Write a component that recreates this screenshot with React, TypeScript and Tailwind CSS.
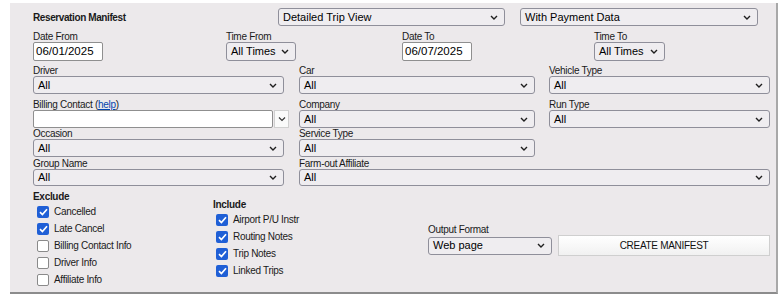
import React from "react";

const Chevron = () => (
  <svg width="8" height="5" viewBox="0 0 8 5" className="shrink-0">
    <path d="M1 1 L4 4 L7 1" fill="none" stroke="#1f1f1f" strokeWidth="1.4" />
  </svg>
);

const Select = ({
  value,
  w,
  h = "h-[18px]",
}: {
  value: string;
  w: string;
  h?: string;
}) => (
  <div
    className={`${w} ${h} flex items-center justify-between border border-[#8f8f9a] rounded-[3px] bg-[#efedf0] pl-[4px] pr-[6px] text-[11px] leading-none text-black`}
  >
    <span>{value}</span>
    <Chevron />
  </div>
);

const Label = ({ children }: { children: React.ReactNode }) => (
  <div className="h-[11px] text-[10px] leading-[11px] tracking-[-0.3px] text-[#1a1a1a] whitespace-nowrap">
    {children}
  </div>
);

const DateInput = ({ value }: { value: string }) => (
  <div className="w-[70px] h-[19px] flex items-center border border-[#8f8f8f] rounded-[2px] bg-white pl-[2px] text-[11.5px] leading-none text-black">
    {value}
  </div>
);

const Check = ({ checked, label }: { checked: boolean; label: string }) => (
  <div className="h-[17px] flex items-center">
    {checked ? (
      <div className="w-[12px] h-[12px] rounded-[2px] bg-[#1f5fd6] flex items-center justify-center">
        <svg width="9" height="8" viewBox="0 0 9 8">
          <path d="M1 4.2 L3.4 6.5 L8 1.3" fill="none" stroke="white" strokeWidth="1.7" />
        </svg>
      </div>
    ) : (
      <div className="w-[12px] h-[12px] rounded-[2px] bg-white border border-[#8a8a8a]" />
    )}
    <span className="ml-[5px] text-[10px] tracking-[-0.3px] text-[#1a1a1a] leading-none">
      {label}
    </span>
  </div>
);

export default function App() {
  return (
    <div className="w-[782px] h-[296px] bg-white font-['Liberation_Sans',Arial,sans-serif] text-black overflow-hidden">
      <div className="ml-[10px] mt-[3px] w-[768px] h-[291px] bg-[#ece9eb] border-r-2 border-b-2 border-r-[#a8a8a8] border-b-[#8c8c8c] pl-[23px] pt-[5px]">
        {/* Row 1 */}
        <div className="flex items-center h-[18px]">
          <div className="w-[245px] text-[10px] font-bold tracking-[-0.4px] text-[#1a1a1a]">
            Reservation Manifest
          </div>
          <Select value="Detailed Trip View" w="w-[227px]" />
          <div className="ml-[15px]">
            <Select value="With Payment Data" w="w-[238px]" />
          </div>
        </div>

        {/* Row 2 */}
        <div className="flex mt-[5px]">
          <div className="w-[193px]">
            <Label>Date From</Label>
            <DateInput value="06/01/2025" />
          </div>
          <div className="w-[176px]">
            <Label>Time From</Label>
            <Select value="All Times" w="w-[70px]" h="h-[19px]" />
          </div>
          <div className="w-[192px]">
            <Label>Date To</Label>
            <DateInput value="06/07/2025" />
          </div>
          <div>
            <Label>Time To</Label>
            <Select value="All Times" w="w-[71px]" h="h-[19px]" />
          </div>
        </div>

        {/* Driver row */}
        <div className="grid grid-cols-[266px_250px_221px] mt-[4px]">
          <div>
            <Label>Driver</Label>
            <Select value="All" w="w-[251px]" />
          </div>
          <div>
            <Label>Car</Label>
            <Select value="All" w="w-[236px]" />
          </div>
          <div>
            <Label>Vehicle Type</Label>
            <Select value="All" w="w-[221px]" />
          </div>
        </div>

        {/* Billing row */}
        <div className="grid grid-cols-[266px_250px_221px] mt-[5px]">
          <div>
            <Label>
              Billing Contact (
              <span className="text-[#0645ad] underline">help</span>)
            </Label>
            <div className="flex h-[18px]">
              <div className="w-[240px] h-[18px] border border-[#8f8f8f] rounded-[2px] bg-white" />
              <div className="ml-[1px] w-[15px] h-[18px] border border-[#d0d0d0] bg-[#fafafa] flex items-center justify-center">
                <svg width="8" height="6" viewBox="0 0 8 6">
                  <path d="M1 1.5 L4 4.5 L7 1.5" fill="none" stroke="#333" strokeWidth="1.2" />
                </svg>
              </div>
            </div>
          </div>
          <div>
            <Label>Company</Label>
            <Select value="All" w="w-[236px]" />
          </div>
          <div>
            <Label>Run Type</Label>
            <Select value="All" w="w-[221px]" />
          </div>
        </div>

        {/* Occasion row */}
        <div className="grid grid-cols-[266px_250px_221px]">
          <div>
            <Label>Occasion</Label>
            <Select value="All" w="w-[251px]" />
          </div>
          <div>
            <Label>Service Type</Label>
            <Select value="All" w="w-[236px]" />
          </div>
        </div>

        {/* Group row */}
        <div className="grid grid-cols-[266px_471px] mt-[1px]">
          <div>
            <Label>Group Name</Label>
            <Select value="All" w="w-[251px]" h="h-[17px]" />
          </div>
          <div>
            <Label>Farm-out Affiliate</Label>
            <Select value="All" w="w-[471px]" h="h-[17px]" />
          </div>
        </div>

        {/* Bottom */}
        <div className="flex">
          <div className="w-[180px] mt-[5px]">
            <div className="h-[12px] text-[10px] leading-[12px] font-bold tracking-[-0.3px] text-[#1a1a1a]">
              Exclude
            </div>
            <div className="ml-[4px]">
              <Check checked label="Cancelled" />
              <Check checked label="Late Cancel" />
              <Check checked={false} label="Billing Contact Info" />
              <Check checked={false} label="Driver Info" />
              <Check checked={false} label="Affiliate Info" />
            </div>
          </div>
          <div className="w-[215px] mt-[13px]">
            <div className="h-[12px] text-[10px] leading-[12px] font-bold tracking-[-0.3px] text-[#1a1a1a]">
              Include
            </div>
            <div className="ml-[3px]">
              <Check checked label="Airport P/U Instr" />
              <Check checked label="Routing Notes" />
              <Check checked label="Trip Notes" />
              <Check checked label="Linked Trips" />
            </div>
          </div>
          <div className="mt-[38px]">
            <Label>Output Format</Label>
            <div className="flex items-center">
              <Select value="Web page" w="w-[124px]" />
              <div className="ml-[6px] w-[212px] h-[21px] border border-[#cfcfcf] bg-gradient-to-b from-white to-[#f1f1f1] flex items-center justify-center text-[10px] tracking-[-0.3px] text-[#111]">
                CREATE MANIFEST
              </div>
            </div>
          </div>
        </div>
      </div>
    </div>
  );
}
